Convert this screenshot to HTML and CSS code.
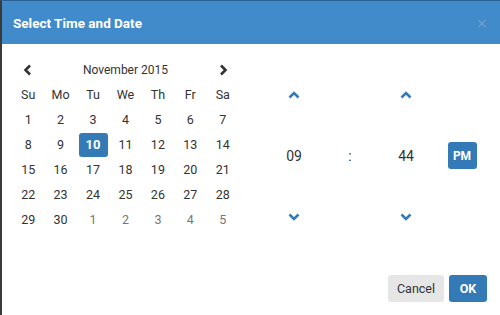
FILE: index.html
```html
<!doctype html>
<html lang="en">
  <head>
    <meta charset="UTF-8" />
    <meta name="viewport" content="width=device-width, initial-scale=1.0" />
    <title>Select Time and Date</title>
    <link rel="stylesheet" href="styles.css">
  </head>
  <body>
    <div class="modal">
      <div class="modal-header">
        <h4 class="modal-title">Select Time and Date</h4>
        <button class="close">&times;</button>
      </div>

      <div class="modal-body">
        <table class="datepicker">
          <thead>
            <tr class="month-row">
              <th class="nav">
                <svg width="10" height="12" viewBox="0 0 10 12"><polyline points="7,1.5 2.5,6 7,10.5" fill="none" stroke="#333" stroke-width="2.6"/></svg>
              </th>
              <th colspan="5" class="month">November 2015</th>
              <th class="nav">
                <svg width="10" height="12" viewBox="0 0 10 12"><polyline points="3,1.5 7.5,6 3,10.5" fill="none" stroke="#333" stroke-width="2.6"/></svg>
              </th>
            </tr>
            <tr class="dow-row">
              <th>Su</th><th>Mo</th><th>Tu</th><th>We</th><th>Th</th><th>Fr</th><th>Sa</th>
            </tr>
          </thead>
          <tbody>
            <tr><td>1</td><td>2</td><td>3</td><td>4</td><td>5</td><td>6</td><td>7</td></tr>
            <tr><td>8</td><td>9</td><td><span class="active">10</span></td><td>11</td><td>12</td><td>13</td><td>14</td></tr>
            <tr><td>15</td><td>16</td><td>17</td><td>18</td><td>19</td><td>20</td><td>21</td></tr>
            <tr><td>22</td><td>23</td><td>24</td><td>25</td><td>26</td><td>27</td><td>28</td></tr>
            <tr><td>29</td><td>30</td><td class="new">1</td><td class="new">2</td><td class="new">3</td><td class="new">4</td><td class="new">5</td></tr>
          </tbody>
        </table>

        <div class="timepicker">
          <a class="step">
            <svg width="12" height="8" viewBox="0 0 12 8"><polyline points="1.5,6.5 6,2 10.5,6.5" fill="none" stroke="#337ab7" stroke-width="2.6"/></svg>
          </a>
          <span></span>
          <a class="step">
            <svg width="12" height="8" viewBox="0 0 12 8"><polyline points="1.5,6.5 6,2 10.5,6.5" fill="none" stroke="#337ab7" stroke-width="2.6"/></svg>
          </a>
          <span></span>

          <span class="value">09</span>
          <span class="sep">:</span>
          <span class="value">44</span>
          <span><button class="btn btn-primary ampm">PM</button></span>

          <a class="step">
            <svg width="12" height="8" viewBox="0 0 12 8"><polyline points="1.5,1.5 6,6 10.5,1.5" fill="none" stroke="#337ab7" stroke-width="2.6"/></svg>
          </a>
          <span></span>
          <a class="step">
            <svg width="12" height="8" viewBox="0 0 12 8"><polyline points="1.5,1.5 6,6 10.5,1.5" fill="none" stroke="#337ab7" stroke-width="2.6"/></svg>
          </a>
          <span></span>
        </div>
      </div>

      <div class="modal-footer">
        <button class="btn btn-default">Cancel</button>
        <button class="btn btn-primary">OK</button>
      </div>
    </div>
  </body>
</html>
```

FILE: styles.css
```css
body {
  margin: 0;
  font-family: Roboto, "Open Sans", sans-serif;
  color: #333;
  background: #fff;
}
.modal {
  width: 500px;
  height: 315px;
  box-sizing: border-box;
  border-left: 2px solid #3a3a3a;
  border-top: 1px solid #2d6297;
  display: flex;
  flex-direction: column;
  background: #fff;
}
.modal-header {
  height: 43px;
  background: #428bca;
  display: flex;
  align-items: center;
  justify-content: space-between;
  padding: 0 13px 0 11px;
}
.modal-title {
  margin: 0;
  font-size: 13.5px;
  font-weight: bold;
  color: #fff;
}
.close {
  border: none;
  background: none;
  padding: 0;
  font-size: 18px;
  line-height: 1;
  color: #6f9fcf;
  font-family: "Open Sans", sans-serif;
}
.modal-body {
  flex: 1;
  display: flex;
  align-items: flex-start;
  padding: 13px 0 0 10px;
}
.datepicker {
  border-collapse: collapse;
  table-layout: fixed;
  width: 227px;
  font-size: 12.5px;
}
.datepicker th,
.datepicker td {
  height: 25px;
  padding: 0;
  text-align: center;
  font-weight: normal;
}
.datepicker .month {
  font-size: 12px;
}
.datepicker .nav svg {
  display: block;
  margin: 0 auto;
}
.datepicker td.new {
  color: #777;
}
.datepicker .active {
  display: block;
  width: 29px;
  height: 24px;
  line-height: 24px;
  margin: 0 auto;
  background: #337ab7;
  color: #fff;
  font-weight: bold;
  border-radius: 3px;
  font-size: 13px;
}
.timepicker {
  margin: 7px 0 0 27px;
  display: grid;
  grid-template-columns: repeat(4, 56px);
  grid-template-rows: repeat(3, 61px);
  align-items: center;
  justify-items: center;
  font-size: 14px;
}
.timepicker .step svg {
  display: block;
}
.timepicker .sep {
  font-size: 14px;
}
.btn {
  font-family: Roboto, "Open Sans", sans-serif;
  border: none;
  border-radius: 3px;
  font-size: 12.5px;
  height: 27px;
  padding: 0 10px;
  cursor: pointer;
}
.btn-default {
  background: #e6e6e6;
  color: #333;
}
.btn-primary {
  background: #337ab7;
  color: #fff;
  font-weight: bold;
}
.ampm {
  width: 29px;
  padding: 0;
  font-size: 12px;
}
.modal-footer {
  display: flex;
  justify-content: flex-end;
  gap: 5px;
  padding: 0 13px 13px 0;
}
.modal-footer .btn-default {
  width: 56px;
  padding: 0;
}
.modal-footer .btn-primary {
  width: 38px;
  padding: 0;
}
```
